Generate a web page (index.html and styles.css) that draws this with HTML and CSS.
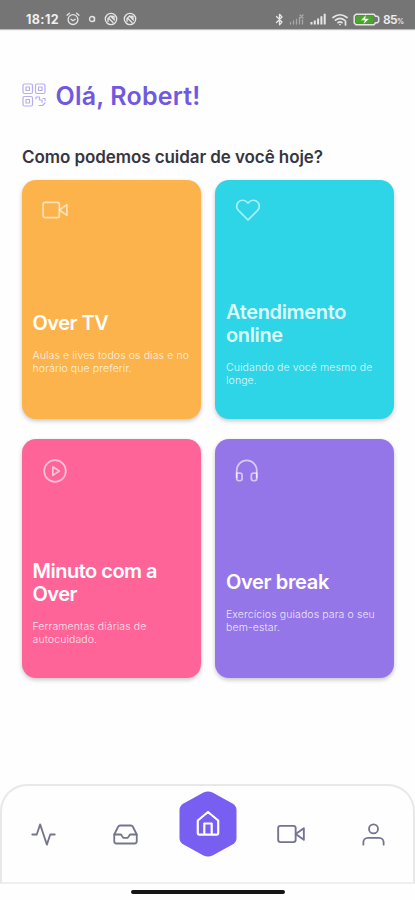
FILE: index.html
```html
<!DOCTYPE html>
<html lang="pt-BR">
<head>
<meta charset="utf-8">
<title>Over</title>
<link rel="stylesheet" href="styles.css">
</head>
<body>
<div class="screen">
  <div class="status">
    <span class="clock">18:12</span>
    <svg class="st-alarm" width="14" height="14" viewBox="0 0 14 14"><circle cx="7" cy="7.6" r="4.9"/><path d="M1 3.2 3.4 1.2M13 3.2 10.600 1.200M5 7.200 7 8.800 9.200 7.200"/></svg>
    <svg class="st-dot" width="8" height="8" viewBox="0 0 8 8"><circle cx="4" cy="4" r="2.500"/><path d="M6.500 2.500v3.500"/></svg>
    <svg class="st-app" width="14" height="14" viewBox="0 0 14 14"><circle cx="7" cy="7" r="5.700"/><path d="M4 9.500V6.500L6.500 4l4 4M4.500 6l4.500 4.500M7 4.200l3 .3v3"/></svg>
    <svg class="st-app" width="14" height="14" viewBox="0 0 14 14"><circle cx="7" cy="7" r="5.700"/><path d="M4 9.500V6.500L6.500 4l4 4M4.500 6l4.500 4.500M7 4.200l3 .3v3"/></svg>
    <span class="spacer"></span>
    <svg width="9" height="13" viewBox="0 0 9 13"><path d="M1.500 3.500 7 9 4.500 11.700V1.300L7 4 1.500 9.500"/></svg>
    <svg class="st-sim" width="17" height="12" viewBox="0 0 17 12"><path d="M1.500 11V9.500M4.500 11V8M7.500 11V6.500M10.500 11V4.500M13.500 11V7"/><path d="M11 2l3 3M14 2l-3 3"/></svg>
    <svg class="st-signal" width="17" height="12" viewBox="0 0 17 12"><path d="M1.500 11.500V9M4.800 11.500V7.500M8.100 11.500V5.500M11.400 11.500V3.200M14.700 11.500V.7"/></svg>
    <svg class="st-wifi" width="17" height="13" viewBox="0 0 17 13"><path d="M1 4.500Q8 -1 15 4.500M3.500 7.200Q8 3.500 12.500 7.200M6 9.700Q8 8 10 9.700"/><path d="M8 11.500h.1M13.500 8v4"/></svg>
    <svg class="st-battery" width="27" height="13" viewBox="0 0 27 13"><rect class="charge" x="3" y="3" width="17" height="7"/><path d="M3 1.200h18l1.500 2h2l1.200 1.500v3.600L24.500 9.800h-2l-1.500 2H3L1.200 10V3z"/><path class="bolt" d="M13 2 8 7.300h4L10.500 11 16 5.800h-4z"/></svg>
    <span class="pct">85<small>%</small></span>
  </div>

  <header class="greeting">
    <svg class="qr" width="24" height="24" viewBox="0 0 24 24"><rect x="1" y="1" width="9.500" height="9.500" rx="1.500"/><rect x="13.500" y="1" width="9.500" height="9.500" rx="1.500"/><rect x="1" y="13.500" width="9.500" height="9.500" rx="1.500"/><rect x="4" y="4" width="3.500" height="3.500"/><rect x="16.500" y="4" width="3.500" height="3.500"/><rect x="4" y="16.500" width="3.500" height="3.500"/><path d="M14 16v-2h3.500v3H20v2.500M21 15.500h2v2M17 22.500h3.500L23 20"/></svg>
    <h1>Olá, Robert!</h1>
  </header>
  <h2>Como podemos cuidar de você hoje?</h2>

  <main class="cards">
    <article class="card tv">
      <svg class="icon" width="26" height="26" viewBox="0 0 24 24"><rect x="1" y="5" width="15" height="14" rx="2"/><path d="m23 7-7 5 7 5z"/></svg>
      <div class="copy"><h3>Over TV</h3><p>Aulas e lives todos os dias e no<br>horário que preferir.</p></div>
    </article>
    <article class="card care">
      <svg class="icon" width="26" height="26" viewBox="0 0 24 24"><path d="M20.840 4.610a5.500 5.500 0 0 0-7.780 0L12 5.670l-1.060-1.060a5.500 5.500 0 0 0-7.780 7.780L12 21.230l8.840-8.840a5.500 5.500 0 0 0 0-7.780z"/></svg>
      <div class="copy"><h3>Atendimento<br>online</h3><p>Cuidando de você mesmo de<br>longe.</p></div>
    </article>
    <article class="card minute">
      <svg class="icon" width="26" height="26" viewBox="0 0 24 24"><circle cx="12" cy="12" r="10"/><path d="m10 8 6 4-6 4z"/></svg>
      <div class="copy"><h3>Minuto com a<br>Over</h3><p>Ferramentas diárias de<br>autocuidado.</p></div>
    </article>
    <article class="card break">
      <svg class="icon" width="26" height="26" viewBox="0 0 24 24"><path d="M2.500 18v-6.500a9.200 9.200 0 0 1 18.500 0V18"/><path d="M21 19a2 2 0 0 1-2 2h-1a2 2 0 0 1-2-2v-3a2 2 0 0 1 2-2h3zM2.500 19a2 2 0 0 0 2 2h1a2 2 0 0 0 2-2v-3a2 2 0 0 0-2-2h-3z"/></svg>
      <div class="copy"><h3>Over break</h3><p>Exercícios guiados para o seu<br>bem-estar.</p></div>
    </article>
  </main>

  <nav class="tabs">
    <a class="tab"><svg width="27" height="27" viewBox="0 0 24 24"><path d="M22 12h-4l-3 9L9 3l-3 9H2"/></svg></a>
    <a class="tab"><svg width="27" height="27" viewBox="0 0 24 24"><path d="M22 12h-6l-2 3h-4l-2-3H2"/><path d="M5.450 5.110 2 12v6a2 2 0 0 0 2 2h16a2 2 0 0 0 2-2v-6l-3.450-6.890A2 2 0 0 0 16.760 4H7.240a2 2 0 0 0-1.790 1.110z"/></svg></a>
    <a class="tab home"><svg width="58" height="66" viewBox="0 0 58 66"><path class="hex" d="M24.500 1.500Q29-.5 33.500 1.500L53.500 12.500Q57.500 15 57.500 19V47Q57.500 51 53.500 53.500L33.500 64.500Q29 66.500 24.500 64.500L4.500 53.500Q.5 51 .5 47V19Q.5 15 4.500 12.500Z"/><path class="house" d="M18.800 29.500 29 21l10.200 8.500V42q0 1.700-1.700 1.700h-17q-1.700 0-1.700-1.700zM25.300 43.500V32.500h7.400v11"/></svg></a>
    <a class="tab video"><svg width="28" height="28" viewBox="0 0 24 24"><rect x="1" y="5" width="15" height="14" rx="2"/><path d="m23 7-7 5 7 5z"/></svg></a>
    <a class="tab profile"><svg width="27" height="27" viewBox="0 0 24 24"><path d="M21 21v-2a4 4 0 0 0-4-4H7a4 4 0 0 0-4 4v2"/><circle cx="12" cy="7" r="4"/></svg></a>
  </nav>
  <div class="gesture"></div>
</div>
</body>
</html>
```
FILE: styles.css
```css
* { box-sizing: border-box; }
body, h1, h2, h3, p { margin: 0; }
body { font-family: Inter, "Liberation Sans", sans-serif; background: #fff; }
svg { display: block; flex: none; fill: none; stroke-linecap: round; stroke-linejoin: round; }
.screen { width: 415px; height: 900px; overflow: hidden; display: flex; flex-direction: column; background: #fefefe; }

.status { height: 29px; flex: none; display: flex; align-items: center; padding: 9px 10px 0 26px; background: #757575; color: #f0f0f0; box-shadow: 0 1px 1px #bbb; }
.status svg { stroke: #e6e6e6; stroke-width: 1.300; }
.clock { width: 34px; font-size: 12.500px; font-weight: 700; letter-spacing: .4px; white-space: nowrap; }
.st-alarm { margin-left: 6px; }
.st-dot { margin-left: 8px; }
.st-app { margin-left: 5px; }
.st-dot + .st-app { margin-left: 8px; }
.spacer { flex: 1; }
.status .st-sim { margin-left: 5px; stroke: #a9a9a9; }
.status .st-signal { margin-left: 4px; stroke-width: 2; stroke-linecap: butt; }
.status .st-wifi { margin-left: 5px; stroke-width: 1.700; }
.status .st-battery { margin-left: 4px; stroke-width: 1.500; }
.status .charge { fill: #4ba52e; stroke: none; }
.status .bolt { fill: #fff; stroke: none; }
.pct { margin-left: 3px; width: 22px; font-size: 12px; font-weight: 600; letter-spacing: -.6px; white-space: nowrap; }
.pct small { font-size: 7px; }

.greeting { display: flex; align-items: center; gap: 10px; height: 32px; margin: 51px 0 0 21.500px; }
.qr { margin-top: -2px; stroke: #b9aee9; stroke-width: 1.200; }
h1 { font-size: 25px; line-height: 32px; font-weight: 600; letter-spacing: .2px; color: #7059e0; white-space: nowrap; }
h2 { margin: 34px 0 0 22px; font-size: 17px; line-height: 22px; font-weight: 600; letter-spacing: -.08px; color: #37363f; white-space: nowrap; }

.cards { display: grid; grid-template-columns: 179px 179px; grid-auto-rows: 239px; gap: 20px 14.500px; margin: 12px 0 0 21.500px; }
.card { display: flex; flex-direction: column; padding: 17px 0 0 11px; border-radius: 14px; color: #fff; box-shadow: 0 2px 4px rgba(0, 0, 0, .22); }
.tv { background: #fcb34b; }
.care { background: #2dd5e6; }
.minute { background: #ff6499; }
.break { background: #9576e9; }
.minute, .break { padding-top: 19px; }
.icon { margin-left: 9px; stroke: rgba(255, 255, 255, .6); stroke-width: 1.600; }
.break .icon { margin-left: 8px; }
.copy { flex: 1; display: flex; flex-direction: column; justify-content: center; gap: 14px; padding-top: 45px; }
.minute .copy, .break .copy { padding-top: 43px; }
h3 { font-size: 20px; line-height: 23px; font-weight: 600; letter-spacing: -.35px; white-space: nowrap; }
.tv h3 { letter-spacing: -.5px; }
.minute h3 { letter-spacing: -.5px; }
.card p { font-size: 10.500px; line-height: 13px; font-weight: 300; letter-spacing: .11px; color: rgba(255, 255, 255, .85); white-space: nowrap; }
.care h3 { color: #dcfbfd; }

.tabs { display: grid; grid-template-columns: repeat(5, 1fr); flex: none; height: 100px; margin-top: auto; border: 2px solid #e8e8ea; border-bottom-color: #efeff0; border-radius: 27px 27px 0 0; background: #fefefe; }
.tab { display: flex; align-items: center; justify-content: center; stroke: #74748f; stroke-width: 1.600; }
.home { align-items: flex-start; padding: 5px 0 0 1px; }
.video { padding-left: 2px; }
.profile { padding-left: 3px; }
.hex { fill: #785ff2; stroke: none; }
.house { stroke: #fff; stroke-width: 2.200; }
.gesture { flex: none; width: 154px; height: 4px; margin: 6px 0 6px 131px; border-radius: 2px; background: #151515; }
```
